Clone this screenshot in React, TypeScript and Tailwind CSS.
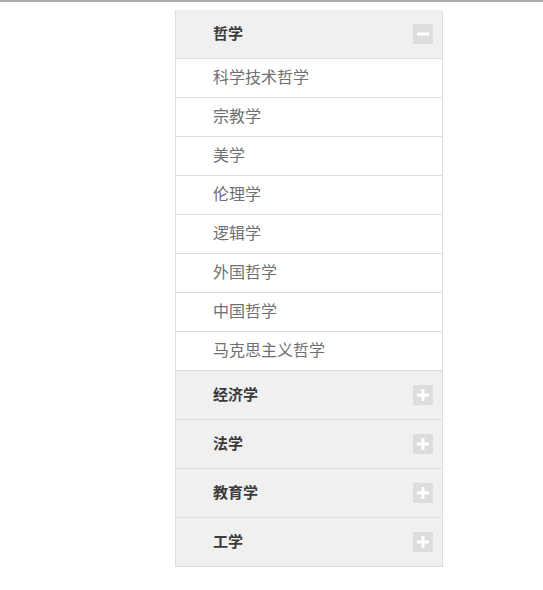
const subjects = [
  {
    name: "哲学",
    open: true,
    items: ["科学技术哲学", "宗教学", "美学", "伦理学", "逻辑学", "外国哲学", "中国哲学", "马克思主义哲学"],
  },
  { name: "经济学", open: false, items: [] },
  { name: "法学", open: false, items: [] },
  { name: "教育学", open: false, items: [] },
  { name: "工学", open: false, items: [] },
]

function ToggleIcon({ open }: { open: boolean }) {
  return (
    <span className="w-5 h-5 bg-[#dddddd] flex items-center justify-center">
      <svg width="14" height="14" viewBox="0 0 14 14">
        <rect x="1" y="5.5" width="12" height="3" fill="#fff" />
        {!open && <rect x="5.5" y="1" width="3" height="12" fill="#fff" />}
      </svg>
    </span>
  )
}

export default function App() {
  return (
    <div className="min-h-[590px] bg-white" style={{ fontFamily: '"Liberation Sans", "Noto Sans CJK SC", sans-serif' }}>
      <div className="h-[2px] bg-[#aaaaaa]" />
      <div className="pt-2 pl-[175px]">
        <div className="w-[268px] border-x border-b border-[#dddddd]">
          {subjects.map((s, i) => (
            <div key={s.name} className={i > 0 ? "border-t border-[#dddddd]" : ""}>
              <div className="h-[48px] bg-[#f0f0f0] flex items-center justify-between pl-[37px] pr-[9px]">
                <span className="text-[15px] font-bold text-[#3a3a3a]">{s.name}</span>
                <ToggleIcon open={s.open} />
              </div>
              {s.open &&
                s.items.map((item) => (
                  <div key={item} className="h-[39px] border-t border-[#dddddd] bg-white flex items-center pl-[37px] text-[16px] text-[#707070]">
                    {item}
                  </div>
                ))}
            </div>
          ))}
        </div>
      </div>
    </div>
  )
}
